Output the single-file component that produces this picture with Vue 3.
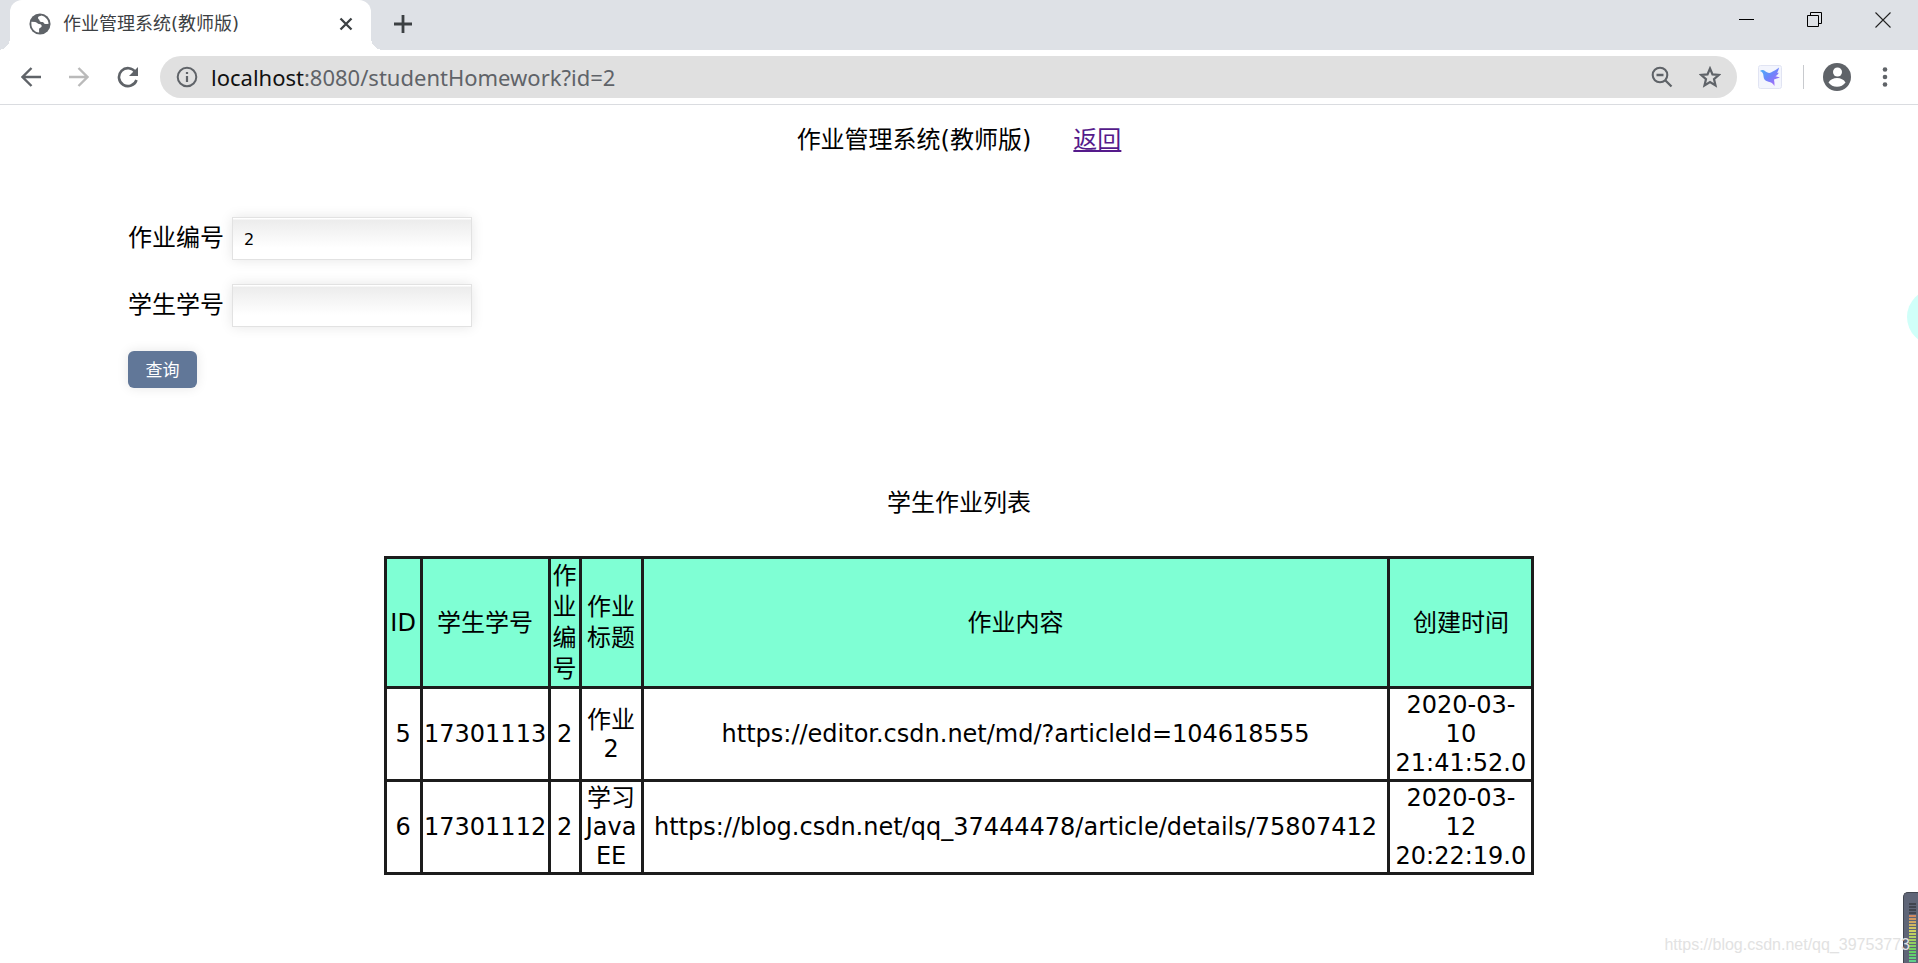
<script setup>
import { ref } from 'vue'

const address = ref('localhost:8080/studentHomework?id=2')
const homeworkId = ref('2')
const studentId = ref('')

const columns = [
  { key: 'id', label: 'ID' },
  { key: 'student', label: '学生学号' },
  { key: 'homework', label: '作业编号' },
  { key: 'title', label: '作业标题' },
  { key: 'content', label: '作业内容' },
  { key: 'created', label: '创建时间' }
]

const rows = [
  {
    id: '5',
    student: '17301113',
    homework: '2',
    title: '作业\n2',
    content: 'https://editor.csdn.net/md/?articleId=104618555',
    created: '2020-03-\n10\n21:41:52.0'
  },
  {
    id: '6',
    student: '17301112',
    homework: '2',
    title: '学习\nJava\nEE',
    content: 'https://blog.csdn.net/qq_37444478/article/details/75807412',
    created: '2020-03-\n12\n20:22:19.0'
  }
]
</script>

<template>
  <div class="window">
    <header class="browser">
      <div class="tabs">
        <div class="tab">
          <svg class="globe" viewBox="0 0 24 24"><circle cx="12" cy="12" r="11.5" fill="#5f6368" /><path d="M2.600 9.500l4.200.2c2 .2 2.400 2.300 4.200 2.300 2.200 0 3 1.300 2.800 2.800-.3 1.500-2.800 1.200-2.800 3v3.500C6 20.800 2.600 17 2.600 12zM13.500 2.800c-1.500.8-3.500.7-3.700 2.400-.2 1.500 1.700 1.500 1.700 3 .1 1.600 1.700 1.600 3.200 1.600 1.400 0 1.500 2 3 2.200 1.300.2 2.300-.4 3.700-.4-.3-4.200-3.500-7.800-7.900-8.800z" fill="#fff" /></svg>
          <span class="tab-title">作业管理系统(教师版)</span>
          <button class="icon-btn tab-close" aria-label="关闭标签页">
            <svg width="14" height="14" viewBox="0 0 14 14"><path d="M1.500 1.500l11 11M12.500 1.500l-11 11" stroke="#3c4043" stroke-width="2.300" /></svg>
          </button>
        </div>
        <button class="icon-btn new-tab" aria-label="新标签页">
          <svg width="18" height="18" viewBox="0 0 18 18"><path d="M9 0v18M0 9h18" stroke="#3c4043" stroke-width="2.800" /></svg>
        </button>
        <div class="window-controls">
          <button class="icon-btn" aria-label="最小化">
            <svg width="16" height="16" viewBox="0 0 16 16"><path d="M0 7.500h15" stroke="#000" /></svg>
          </button>
          <button class="icon-btn" aria-label="还原">
            <svg width="16" height="16" viewBox="0 0 16 16"><path d="M.5 3.500h11v11H.5zM3.500 3.500v-3h11v11h-3" fill="none" stroke="#000" /></svg>
          </button>
          <button class="icon-btn" aria-label="关闭">
            <svg width="16" height="16" viewBox="0 0 16 16"><path d="M.5.5l15 15M15.500.5l-15 15" stroke="#222" stroke-width="1.100" /></svg>
          </button>
        </div>
      </div>
      <div class="toolbar">
        <nav class="nav">
          <button class="icon-btn" aria-label="后退">
            <svg width="20" height="20" viewBox="0 0 20 20"><path d="M20 10H2M10.500 1L1.500 10l9 9" fill="none" stroke="#5f6368" stroke-width="2.400" /></svg>
          </button>
          <button class="icon-btn" aria-label="前进">
            <svg width="20" height="20" viewBox="0 0 20 20"><path d="M0 10h18M9.500 1l9 9-9 9" fill="none" stroke="#bababa" stroke-width="2.400" /></svg>
          </button>
          <button class="icon-btn" aria-label="刷新">
            <svg width="22" height="22" viewBox="0 0 22 22"><path d="M18.500 6.200A9 9 0 1 0 19.500 14" fill="none" stroke="#5f6368" stroke-width="2.600" /><path d="M21 1v9h-9z" fill="#5f6368" /></svg>
          </button>
        </nav>
        <div class="omnibox">
          <svg width="22" height="22" viewBox="0 0 22 22"><circle cx="11" cy="11" r="9.300" fill="none" stroke="#5f6368" stroke-width="2" /><path d="M11 10v6M11 6v2" stroke="#5f6368" stroke-width="2.200" /></svg>
          <div class="address">
            <input v-model="address" class="address-input" type="text" aria-label="地址" />
            <span class="address-text" aria-hidden="true"><b>localhost</b>:8080/studentHomework?id=2</span>
          </div>
          <button class="icon-btn zoom" aria-label="缩放">
            <svg width="22" height="22" viewBox="0 0 22 22"><circle cx="9" cy="9" r="7.300" fill="none" stroke="#5f6368" stroke-width="2.100" /><path d="M5.500 9h7M14 14l6.500 6.500" stroke="#5f6368" stroke-width="2.300" /></svg>
          </button>
          <button class="icon-btn" aria-label="收藏">
            <svg width="22" height="22" viewBox="0 0 22 22"><path d="M11 2.500l2.500 5.900 6.400.5-4.900 4.200 1.500 6.300L11 16l-5.500 3.400L7 13.100 2.100 8.900l6.400-.5z" fill="none" stroke="#5f6368" stroke-width="2.200" /></svg>
          </button>
        </div>
        <button class="icon-btn bird" aria-label="扩展程序">
          <svg width="24" height="24" viewBox="0 0 24 24">
            <defs><linearGradient id="wing" x1="0" y1="0" x2="1" y2="1"><stop offset="0" stop-color="#45b5f8" /><stop offset=".5" stop-color="#6f83fb" /><stop offset="1" stop-color="#bd63f6" /></linearGradient></defs>
            <rect x=".5" y=".5" width="23" height="23" rx="2" fill="#f3f5fd" stroke="#e1e4f3" />
            <path d="M2 6c1.500-1.300 3.500-1.400 5 0 1.600 1.500 4 2.500 6 1.500 3-1.500 5.500-3 8-5-.3 2.200-1 4-2 5.200h1.800c-.8 1.600-1.800 2.600-3.300 3.500l4.500 1.300c-2.200.8-4 1.300-6 2 .3 2.500.7 4.300.4 6.500-1.500-2.800-3.200-4-5.900-4.300-3-.3-5-2.400-5-5.400C5.500 9 4.500 6.700 2 6z" fill="url(#wing)" />
          </svg>
        </button>
        <span class="divider"></span>
        <button class="icon-btn profile" aria-label="用户">
          <svg width="28" height="28" viewBox="0 0 28 28"><circle cx="14" cy="14" r="14" fill="#5f6368" /><circle cx="14.500" cy="9" r="4.500" fill="#fff" /><path d="M5.500 19.500c1.500-3 5-4.500 8.500-4.500s7 1.500 8.500 4.500c-2 2.800-5 4.200-8.500 4.200s-6.500-1.400-8.500-4.200z" fill="#fff" /></svg>
        </button>
        <button class="icon-btn more" aria-label="更多">
          <svg width="6" height="20" viewBox="0 0 6 20"><g fill="#5f6368"><circle cx="3" cy="2.500" r="2.300" /><circle cx="3" cy="10" r="2.300" /><circle cx="3" cy="17.500" r="2.300" /></g></svg>
        </button>
      </div>
    </header>

    <main class="page">
      <div class="heading">
        <span>作业管理系统(教师版)</span>
        <a href="#">返回</a>
      </div>

      <form class="search" @submit.prevent>
        <div class="field">
          <label for="homework-id">作业编号</label>
          <input id="homework-id" v-model="homeworkId" type="text" />
        </div>
        <div class="field">
          <label for="student-id">学生学号</label>
          <input id="student-id" v-model="studentId" type="text" />
        </div>
        <button class="submit" type="submit">查询</button>
      </form>

      <table class="list">
        <caption>学生作业列表</caption>
        <colgroup>
          <col v-for="c in columns" :key="c.key" :class="'col-' + c.key" />
        </colgroup>
        <thead>
          <tr>
            <th v-for="c in columns" :key="c.key" scope="col">{{ c.label }}</th>
          </tr>
        </thead>
        <tbody>
          <tr v-for="r in rows" :key="r.id">
            <td v-for="c in columns" :key="c.key">{{ r[c.key] }}</td>
          </tr>
        </tbody>
      </table>
    </main>

    <div class="bubble"></div>
    <div class="meter">
      <i v-for="n in 4" :key="'off' + n" class="off"></i>
      <i v-for="n in 18" :key="n" :style="{ background: `hsl(${14 + n * 8}, 55%, 60%)` }"></i>
    </div>
    <div class="watermark">https://blog.csdn.net/qq_39753773</div>
  </div>
</template>

<style>
html,
body {
  margin: 0;
  background: #fff;
}
</style>

<style scoped>
.window {
  position: relative;
  min-height: 100vh;
  overflow: hidden;
  font-family: "DejaVu Sans", "Noto Sans CJK SC", sans-serif;
  font-size: 24px;
  color: #000;
}

.icon-btn {
  display: flex;
  align-items: center;
  justify-content: center;
  flex: none;
  padding: 0;
  border: 0;
  background: none;
}

.tabs {
  display: flex;
  height: 50px;
  background: #dee1e6;
}

.tab {
  position: relative;
  display: flex;
  align-items: center;
  box-sizing: border-box;
  width: 361px;
  margin-left: 10px;
  padding: 0 18px 2px 19px;
  border-radius: 12px 12px 0 0;
  background: #fff;
}

.tab::before,
.tab::after {
  content: "";
  position: absolute;
  bottom: 0;
  width: 12px;
  height: 12px;
}

.tab::before {
  right: 100%;
  background: radial-gradient(circle at 0 0, #dee1e6 12px, #fff 12px);
}

.tab::after {
  left: 100%;
  background: radial-gradient(circle at 100% 0, #dee1e6 12px, #fff 12px);
}

.globe {
  flex: none;
  width: 22px;
  height: 22px;
}

.tab-title {
  flex: 1;
  margin-left: 12px;
  font-family: "DejaVu Sans", "Noto Sans CJK SC", sans-serif;
  font-size: 18px;
  line-height: 24px;
  color: #3c4043;
}

.new-tab {
  width: 64px;
  padding-bottom: 2px;
}

.window-controls {
  display: flex;
  margin-left: auto;
  padding: 0 1px 10px 0;
}

.window-controls .icon-btn {
  width: 68px;
}

.toolbar {
  display: flex;
  align-items: center;
  height: 54px;
  border-bottom: 1px solid #dadce0;
  padding-right: 23px;
}

.nav {
  display: flex;
  gap: 28px;
  box-sizing: border-box;
  width: 160px;
  padding-left: 21px;
}

.omnibox {
  display: flex;
  align-items: center;
  flex: 1;
  box-sizing: border-box;
  height: 42px;
  padding: 0 16px;
  border-radius: 21px;
  background: #e0e0e0;
}

.address {
  position: relative;
  flex: 1;
  margin-left: 13px;
  font-family: "Noto Sans", sans-serif;
  font-size: 22px;
  line-height: 30px;
}

.address-input {
  display: block;
  box-sizing: border-box;
  width: 100%;
  height: 30px;
  padding: 0;
  border: 0;
  outline: 0;
  background: none;
  font: inherit;
  color: transparent;
}

.address-text {
  position: absolute;
  inset: 0;
  color: #5f6368;
  pointer-events: none;
}

.address-text b {
  font-weight: 400;
  color: #111;
}

.zoom {
  margin-right: 26px;
}

.bird {
  margin-left: 21px;
}

.divider {
  width: 1px;
  height: 24px;
  margin: 0 19px 0 21px;
  background: #c8cace;
}

.more {
  width: 20px;
  margin-left: 24px;
}

.heading {
  display: flex;
  justify-content: center;
  gap: 42px;
  padding-top: 19px;
  line-height: 32px;
}

.heading a {
  color: #551a8b;
}

.search {
  display: flex;
  flex-direction: column;
  align-items: flex-start;
  gap: 24px;
  margin: 61px 128px 0;
}

.field {
  display: flex;
  align-items: center;
  gap: 8px;
}

.field label {
  line-height: 40px;
  padding-bottom: 2px;
}

.field input {
  box-sizing: border-box;
  width: 240px;
  height: 43px;
  padding: 2px 11px 0;
  border: 1px solid #e2e2e2;
  border-radius: 0;
  outline: 0;
  background: linear-gradient(#fff 0, #fff 1px, #ececec 2px, #fff 30px);
  box-shadow: 0 0 12px rgba(0, 0, 0, 0.1);
  font-family: "DejaVu Sans", sans-serif;
  font-size: 16px;
  color: #000;
}

.submit {
  width: 69px;
  height: 37px;
  padding: 0 0 3px;
  border: 0;
  border-radius: 6px;
  background: #617798;
  box-shadow: 0 0 12px rgba(0, 0, 0, 0.1);
  font-family: "Noto Sans CJK SC", sans-serif;
  font-size: 17px;
  color: #fff;
}

.list {
  width: 60%;
  margin: 97px auto 0;
  table-layout: fixed;
  border-collapse: collapse;
  text-align: center;
}

.list caption {
  padding-bottom: 35px;
  line-height: 36px;
}

.list th,
.list td {
  padding: 2px 0 1px;
  border: 3px solid #1c1c1c;
  font-weight: 400;
  white-space: pre-line;
}

.list th {
  background: #7fffd4;
  line-height: 31px;
}

.list td {
  height: 87px;
  line-height: 29px;
}

.col-id {
  width: 36px;
}

.col-student {
  width: 128px;
}

.col-homework {
  width: 31px;
}

.col-title {
  width: 62px;
}

.col-created {
  width: 144px;
}

.bubble {
  position: absolute;
  top: 289px;
  right: -45px;
  width: 56px;
  height: 56px;
  border-radius: 50%;
  background: #d0fff9;
}

.meter {
  position: absolute;
  right: 0;
  bottom: 0;
  display: flex;
  flex-direction: column;
  gap: 1px;
  box-sizing: border-box;
  width: 15px;
  height: 71px;
  padding: 10px 2px 0 5px;
  overflow: hidden;
  border: 1px solid #41454f;
  border-width: 1px 0 0 1px;
  border-radius: 5px 0 0 0;
  background: #5f6577;
}

.meter i {
  flex: none;
  height: 2px;
}

.meter .off {
  background: #41454f;
}

.watermark {
  position: absolute;
  right: 8px;
  bottom: 8px;
  font-family: "Liberation Sans", sans-serif;
  font-size: 16px;
  line-height: 20px;
  color: #e2e2e2;
}
</style>
